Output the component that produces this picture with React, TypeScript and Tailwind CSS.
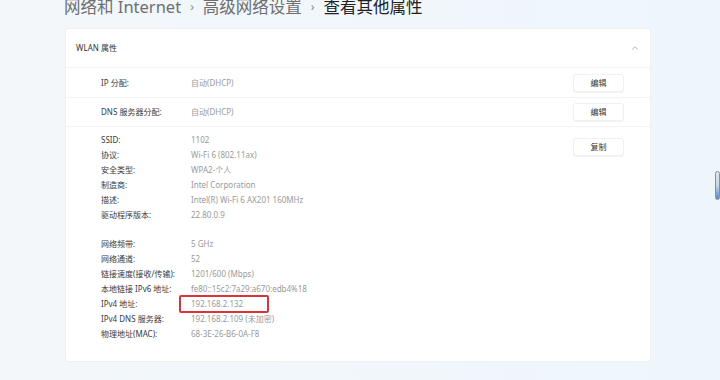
import { ChevronUp } from 'lucide-react';

const font = { fontFamily: '"Noto Sans", "Noto Sans CJK SC", sans-serif' };

const groupA: [string, string][] = [
  ['SSID:', '1102'],
  ['协议:', 'Wi-Fi 6 (802.11ax)'],
  ['安全类型:', 'WPA2-个人'],
  ['制造商:', 'Intel Corporation'],
  ['描述:', 'Intel(R) Wi-Fi 6 AX201 160MHz'],
  ['驱动程序版本:', '22.80.0.9'],
];

const groupB: [string, string][] = [
  ['网络频带:', '5 GHz'],
  ['网络通道:', '52'],
  ['链接速度(接收/传输):', '1201/600 (Mbps)'],
  ['本地链接 IPv6 地址:', 'fe80::15c2:7a29:a670:edb4%18'],
  ['IPv4 地址:', '192.168.2.132'],
  ['IPv4 DNS 服务器:', '192.168.2.109 (未加密)'],
  ['物理地址(MAC):', '68-3E-26-B6-0A-F8'],
];

function SmallButton({ label }: { label: string }) {
  return (
    <button className="w-[51px] h-[18px] bg-white border border-[#f0f0f0] rounded-[3px] shadow-[0_1px_1px_rgba(0,0,0,0.05)] text-[8px] text-[#333]">
      {label}
    </button>
  );
}

function InfoRow({ label, value }: { label: string; value: string }) {
  const boxed = label === 'IPv4 地址:';
  return (
    <div className="flex items-center h-[15px]">
      <span className="w-[90px] text-[8px] text-[#3a3a3a]">{label}</span>
      <span className="relative text-[8px] text-[#9a9a9a]">
        {value}
        {boxed && (
          <span className="absolute left-[-12px] top-[-3px] w-[90px] h-[18px] border-2 border-[#d8353a] rounded-[2px]" />
        )}
      </span>
    </div>
  );
}

export default function App() {
  return (
    <div
      className="relative w-[720px] h-[380px] overflow-hidden bg-gradient-to-r from-[#f3f7fa] to-[#eef6fc]"
      style={font}
    >
      {/* Breadcrumb */}
      <div className="flex items-center gap-[9px] h-[16px] mt-[-1px] pl-[64px] text-[16.5px] leading-none">
        <span className="text-[#6f6f6f]">网络和 Internet</span>
        <span className="text-[#8a8a8a] text-[12px]">›</span>
        <span className="text-[#6f6f6f]">高级网络设置</span>
        <span className="text-[#8a8a8a] text-[12px]">›</span>
        <span className="text-[#1f1f1f]">查看其他属性</span>
      </div>

      {/* Card */}
      <div className="ml-[65px] mt-[13px] w-[586px] h-[334px] bg-white border border-[#eef1f3] rounded-[3px]">
        <div className="flex items-center justify-between h-[39px] pl-[10px] pr-[10px] border-b border-[#f3f3f3]">
          <span className="text-[8px] text-[#333]">WLAN 属性</span>
          <ChevronUp className="w-[10px] h-[10px] text-[#888]" strokeWidth={1.5} />
        </div>

        <div className="flex items-center justify-between h-[30px] pl-[35px] pr-[26px] border-b border-[#f3f3f3]">
          <div className="flex items-center">
            <span className="w-[90px] text-[8px] text-[#3a3a3a]">IP 分配:</span>
            <span className="text-[8px] text-[#9a9a9a]">自动(DHCP)</span>
          </div>
          <SmallButton label="编辑" />
        </div>

        <div className="flex items-center justify-between h-[29px] pl-[35px] pr-[26px] border-b border-[#f3f3f3]">
          <div className="flex items-center">
            <span className="w-[90px] text-[8px] text-[#3a3a3a]">DNS 服务器分配:</span>
            <span className="text-[8px] text-[#9a9a9a]">自动(DHCP)</span>
          </div>
          <SmallButton label="编辑" />
        </div>

        <div className="flex justify-between pl-[35px] pr-[26px] pt-[5px]">
          <div className="flex flex-col">
            {groupA.map(([l, v]) => (
              <InfoRow key={l} label={l} value={v} />
            ))}
            <div className="h-[14px]" />
            {groupB.map(([l, v]) => (
              <InfoRow key={l} label={l} value={v} />
            ))}
          </div>
          <div>
            <SmallButton label="复制" />
          </div>
        </div>
      </div>

      {/* Scrollbar thumb */}
      <div className="absolute left-[715px] top-[171px] w-[5px] h-[29px] rounded-[3px] border border-[#8a8f96] bg-gradient-to-b from-[#dfe6ee] via-[#c9d6e6] to-[#5b84c4]" />
    </div>
  );
}
